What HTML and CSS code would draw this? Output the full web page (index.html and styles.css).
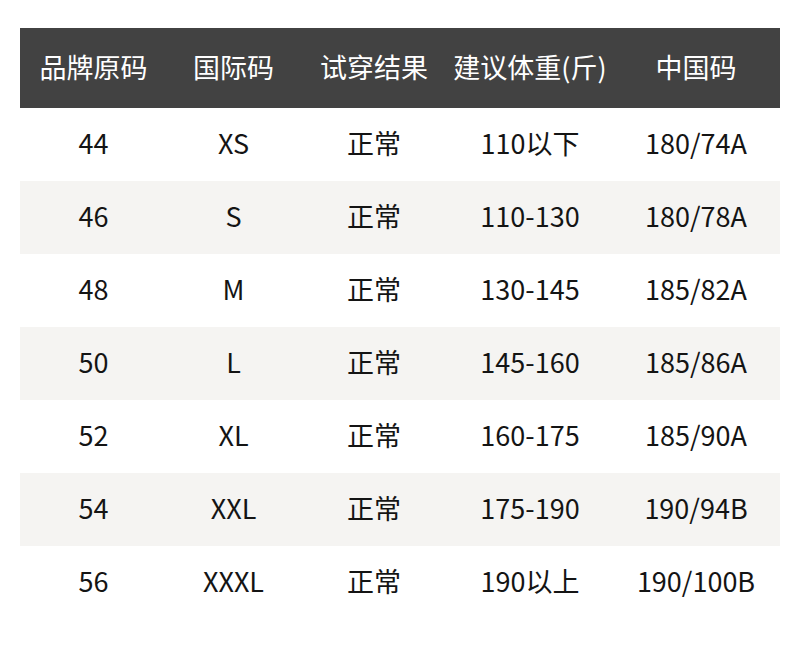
FILE: index.html
```html
<!DOCTYPE html>
<html lang="zh-CN">
<head>
<meta charset="utf-8">
<link rel="stylesheet" href="styles.css">
</head>
<body>
<div class="size-table">
  <div class="row head">
    <div class="cell">品牌原码</div><div class="cell">国际码</div><div class="cell">试穿结果</div><div class="cell">建议体重(斤)</div><div class="cell">中国码</div>
  </div>
  <div class="row">
    <div class="cell">44</div><div class="cell">XS</div><div class="cell">正常</div><div class="cell">110以下</div><div class="cell">180/74A</div>
  </div>
  <div class="row alt">
    <div class="cell">46</div><div class="cell">S</div><div class="cell">正常</div><div class="cell">110-130</div><div class="cell">180/78A</div>
  </div>
  <div class="row">
    <div class="cell">48</div><div class="cell">M</div><div class="cell">正常</div><div class="cell">130-145</div><div class="cell">185/82A</div>
  </div>
  <div class="row alt">
    <div class="cell">50</div><div class="cell">L</div><div class="cell">正常</div><div class="cell">145-160</div><div class="cell">185/86A</div>
  </div>
  <div class="row">
    <div class="cell">52</div><div class="cell">XL</div><div class="cell">正常</div><div class="cell">160-175</div><div class="cell">185/90A</div>
  </div>
  <div class="row alt">
    <div class="cell">54</div><div class="cell">XXL</div><div class="cell">正常</div><div class="cell">175-190</div><div class="cell">190/94B</div>
  </div>
  <div class="row">
    <div class="cell">56</div><div class="cell">XXXL</div><div class="cell">正常</div><div class="cell">190以上</div><div class="cell">190/100B</div>
  </div>
</div>
</body>
</html>
```

FILE: styles.css
```css
html, body {
  margin: 0;
  padding: 0;
  background: #ffffff;
}
body {
  font-family: "Noto Sans CJK SC", "Noto Sans", sans-serif;
  color: #141414;
}
.size-table {
  margin: 28px 20px 0 20px;
  width: 760px;
}
.row {
  display: grid;
  grid-template-columns: 147px 133px 148px 164px 168px;
  height: 73px;
  align-items: center;
}
.row.head {
  height: 80px;
  background: #424242;
  color: #ffffff;
}
.row.alt {
  background: #f5f4f2;
}
.cell {
  text-align: center;
  font-size: 27px;
  line-height: 1;
  padding-bottom: 4px;
  white-space: nowrap;
}
```
